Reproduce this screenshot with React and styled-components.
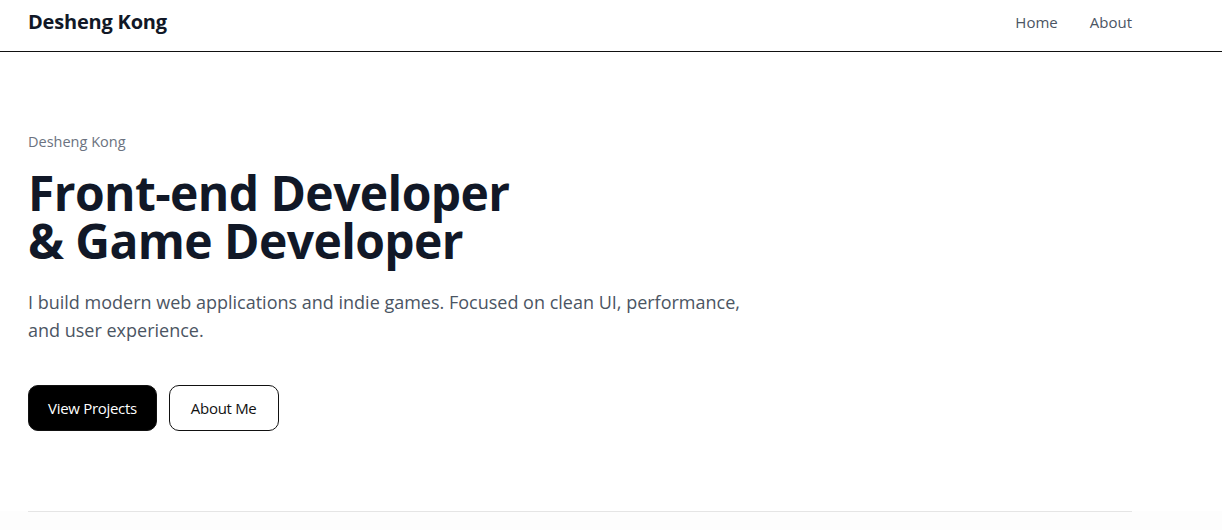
import React from "react";
import styled, { createGlobalStyle } from "styled-components";

const Global = createGlobalStyle`
  * { box-sizing: border-box; }
  html, body { margin: 0; padding: 0; background: #ffffff; }
  body { font-family: "Open Sans", "Noto Sans", sans-serif; color: #111827; }
`;

const Header = styled.header`
  height: 52px;
  padding-bottom: 8px;
  border-bottom: 1px solid #111;
  display: flex;
  align-items: center;
`;

const Container = styled.div`
  width: 100%;
  max-width: 1160px;
  padding: 0 28px;
  display: flex;
  align-items: center;
  justify-content: space-between;
`;

const Logo = styled.div`
  font-size: 20px;
  font-weight: 700;
  color: #111827;
  letter-spacing: -0.2px;
`;

const Nav = styled.nav`
  display: flex;
  gap: 32px;
`;

const NavLink = styled.a`
  font-size: 15px;
  color: #4b5563;
  text-decoration: none;
`;

const Hero = styled.section`
  padding: 80px 28px 0;
  max-width: 1160px;
  height: 459px;
`;

const Eyebrow = styled.p`
  margin: 0;
  font-size: 14.5px;
  color: #6b7280;
  line-height: 20px;
`;

const Title = styled.h1`
  margin: 17px 0 0;
  font-size: 48px;
  line-height: 48px;
  font-weight: 700;
  color: #111827;
  letter-spacing: -0.6px;
`;

const Lead = styled.p`
  margin: 23px 0 0;
  font-size: 18px;
  line-height: 28px;
  color: #4b5563;
  max-width: 745px;
`;

const Actions = styled.div`
  display: flex;
  gap: 12px;
  margin-top: 41px;
`;

const Button = styled.a`
  display: inline-flex;
  align-items: center;
  justify-content: center;
  height: 46px;
  padding: 0 ${(p) => (p.$primary ? "19px" : "21px")};
  border-radius: 10px;
  font-size: 15px;
  letter-spacing: -0.3px;
  text-decoration: none;
  border: 1px solid #111;
  background: ${(p) => (p.$primary ? "#000" : "#fff")};
  color: ${(p) => (p.$primary ? "#fff" : "#111")};
`;

const Footer = styled.footer`
  background: #fdfdfd;
  padding: 0 90px 0 28px;
  height: 19px;
`;

const Rule = styled.hr`
  margin: 0;
  border: 0;
  border-top: 1px solid #e5e5e5;
  max-width: 1104px;
`;

export default function App() {
  return (
    <>
      <Global />
      <Header>
        <Container>
          <Logo>Desheng Kong</Logo>
          <Nav>
            <NavLink href="#">Home</NavLink>
            <NavLink href="#">About</NavLink>
          </Nav>
        </Container>
      </Header>
      <Hero>
        <Eyebrow>Desheng Kong</Eyebrow>
        <Title>
          Front-end Developer
          <br />& Game Developer
        </Title>
        <Lead>
          I build modern web applications and indie games. Focused on clean UI,
          performance, and user experience.
        </Lead>
        <Actions>
          <Button $primary href="#">View Projects</Button>
          <Button href="#">About Me</Button>
        </Actions>
      </Hero>
      <Footer>
        <Rule />
      </Footer>
    </>
  );
}
